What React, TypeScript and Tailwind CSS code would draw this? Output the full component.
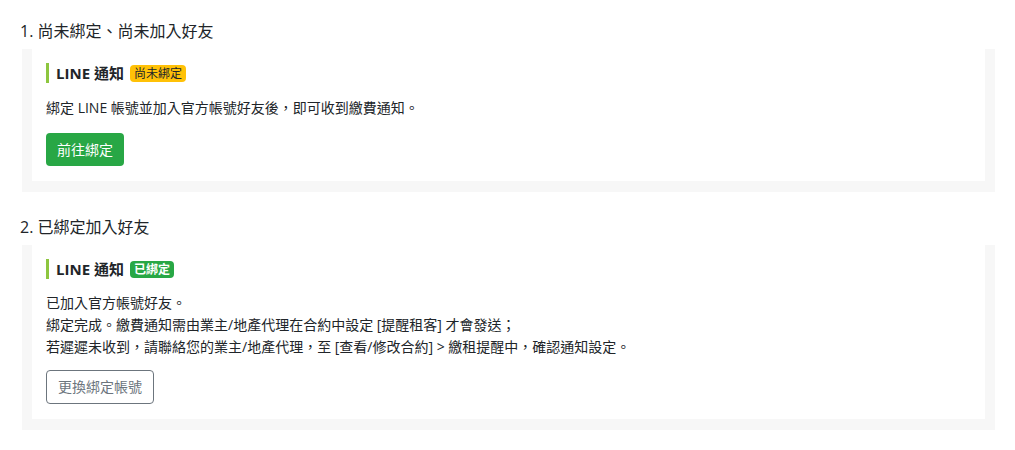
import React from "react";

const font = { fontFamily: '"Open Sans", "Noto Sans CJK TC", sans-serif' };

function Title({ badge }: { badge: React.ReactNode }) {
  return (
    <div className="flex items-center h-[20px] border-l-[3px] border-[#8dc63f] pl-[7px] gap-[6px]">
      <span className="text-[15px] font-bold text-[#212529] leading-[20px]">LINE 通知</span>
      {badge}
    </div>
  );
}

export default function App() {
  return (
    <div className="bg-white min-h-[450px] pt-[19px] px-[20px] text-[#212529]" style={font}>
      <h2 className="text-[16px] leading-[24px]">1. 尚未綁定、尚未加入好友</h2>
      <div className="mt-[6px] ml-[2px] bg-[#f7f7f7] px-[10px] pb-[11px]">
        <div className="bg-white pl-[14px] pt-[14px] pb-[15px]">
          <Title
            badge={
              <span className="inline-flex items-center h-[17px] px-[4px] rounded-[4px] bg-[#ffc107] text-[12px] leading-[17px] text-[#212529]">
                尚未綁定
              </span>
            }
          />
          <p className="mt-[14px] text-[14px] leading-[21px]">綁定 LINE 帳號並加入官方帳號好友後，即可收到繳費通知。</p>
          <button className="mt-[15px] block rounded-[4px] bg-[#28a745] text-white text-[14px] leading-[21px] px-[11px] py-[6px]">
            前往綁定
          </button>
        </div>
      </div>

      <h2 className="mt-[23px] text-[16px] leading-[24px]">2. 已綁定加入好友</h2>
      <div className="mt-[6px] ml-[2px] bg-[#f7f7f7] px-[10px] pb-[11px]">
        <div className="bg-white pl-[14px] pt-[14px] pb-[15px]">
          <Title
            badge={
              <span className="inline-flex items-center h-[17px] px-[4px] rounded-[4px] bg-[#28a745] text-[12px] leading-[17px] font-bold text-white">
                已綁定
              </span>
            }
          />
          <div className="mt-[13px] text-[14px] leading-[22px]">
            <p>已加入官方帳號好友。</p>
            <p>綁定完成。繳費通知需由業主/地產代理在合約中設定 [提醒租客] 才會發送；</p>
            <p>若遲遲未收到，請聯絡您的業主/地產代理，至 [查看/修改合約] &gt; 繳租提醒中，確認通知設定。</p>
          </div>
          <button className="mt-[12px] block rounded-[4px] border border-[#6c757d] bg-white text-[#6c757d] text-[14px] leading-[22px] px-[11px] py-[5px]">
            更換綁定帳號
          </button>
        </div>
      </div>
    </div>
  );
}
